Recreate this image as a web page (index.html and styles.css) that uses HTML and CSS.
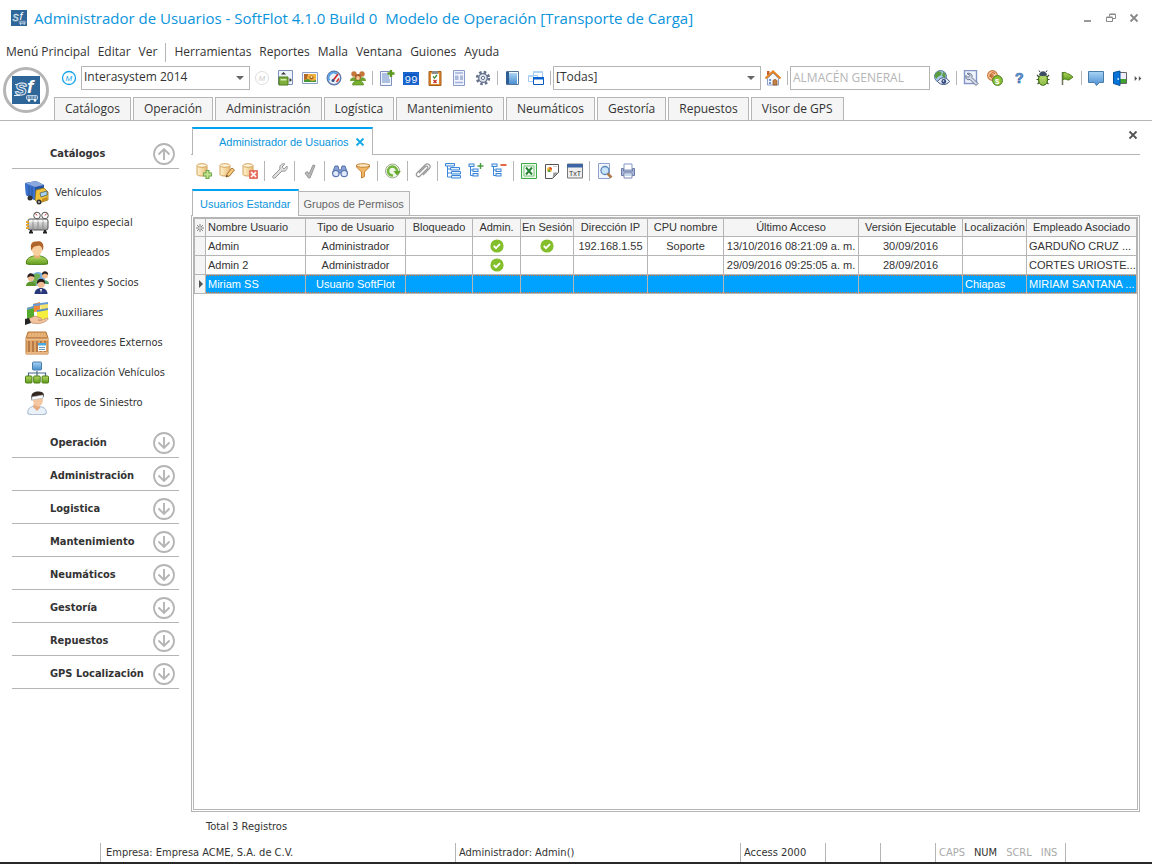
FILE: index.html
```html
<!DOCTYPE html>
<html lang="es">
<head>
<meta charset="utf-8">
<title>Administrador de Usuarios - SoftFlot</title>
<link rel="stylesheet" href="styles.css">
</head>
<body>
<svg class="defs" aria-hidden="true">
  <linearGradient id="gBlue" x1="0" y1="0" x2="0" y2="1"><stop offset="0" stop-color="#a9d3f5"/><stop offset="1" stop-color="#4a8fd0"/></linearGradient>
  <linearGradient id="gGreen" x1="0" y1="0" x2="0" y2="1"><stop offset="0" stop-color="#b5d860"/><stop offset="1" stop-color="#5d9a1c"/></linearGradient>
  <linearGradient id="gGold" x1="0" y1="0" x2="1" y2="0"><stop offset="0" stop-color="#fff3cf"/><stop offset="1" stop-color="#e9bc76"/></linearGradient>
  <linearGradient id="gGray" x1="0" y1="0" x2="0" y2="1"><stop offset="0" stop-color="#f6f6f6"/><stop offset="1" stop-color="#9b9b9b"/></linearGradient>
  <symbol id="up" viewBox="0 0 22 22"><circle cx="11" cy="11" r="10" fill="none" stroke="#b5b5b5" stroke-width="1.800"/><path d="M11 17V6M5.500 11.500 11 6l5.500 5.500" fill="none" stroke="#b5b5b5" stroke-width="1.900"/></symbol>
  <symbol id="down" viewBox="0 0 22 22"><circle cx="11" cy="11" r="10" fill="none" stroke="#b5b5b5" stroke-width="1.800"/><path d="M11 5v11M5.500 10.500 11 16l5.500-5.500" fill="none" stroke="#b5b5b5" stroke-width="1.900"/></symbol>
  <symbol id="check" viewBox="0 0 14 14"><circle cx="7" cy="7" r="6.600" fill="#84bf2b"/><path d="M3.800 7 6 9.200l4-4" fill="none" stroke="#fff" stroke-width="1.900"/></symbol>
  <symbol id="db" viewBox="0 0 16 16"><path d="M1 2.500v9c0 2 10 2 10 0v-9" fill="url(#gGold)" stroke="#d3a25d"/><ellipse cx="6" cy="2.500" rx="5" ry="1.800" fill="#fff6dc" stroke="#d3a25d"/></symbol>
  <symbol id="cross" viewBox="0 0 10 10"><path d="M1.500 1.500l7 7M8.500 1.500l-7 7" fill="none" stroke="currentColor" stroke-width="1.800"/></symbol>
  <symbol id="tree" viewBox="0 0 16 16"><rect x="1" y="1" width="5" height="2.500"/><rect x="5" y="6" width="5" height="2.500"/><rect x="5" y="10.500" width="5" height="2.500"/><path d="M2.500 3.500v9H5M2.500 7H5" fill="none"/></symbol>
  <symbol id="bus" viewBox="0 0 28 28"><rect x="14.500" y="19.500" width="11" height="4" rx="1" fill="#5c86ad" stroke="#dbe7f2" stroke-width=".8"/><path d="M17 20v3M20 20v3M23 20v3" stroke="#dbe7f2" stroke-width=".7"/><circle cx="17" cy="24.500" r="1.200" fill="#fff"/><circle cx="23" cy="24.500" r="1.200" fill="#fff"/></symbol>
</svg>

<header class="head">
  <div class="titlebar">
    <svg class="app-icon" viewBox="0 0 28 28"><rect width="28" height="28" fill="#2f6699"/><text x="3" y="19" font-family="Liberation Sans" font-size="21" font-style="italic" fill="#4f80ad" stroke="#e3edf6" stroke-width="1">s</text><text x="15" y="18" font-family="Liberation Sans" font-size="19" font-style="italic" fill="#fff">f</text><use href="#bus"/></svg>
    <h1 class="title">Administrador de Usuarios - SoftFlot 4.1.0 Build 0&nbsp; Modelo de Operación [Transporte de Carga]</h1>
    <div class="winbtns">
      <button class="winbtn" aria-label="Minimizar"><svg viewBox="0 0 10 10"><path d="M1 8h7" stroke="#999" stroke-width="2"/></svg></button>
      <button class="winbtn" aria-label="Restaurar"><svg viewBox="0 0 10 10"><path d="M.5 4.500h6v4h-6zM.5 4h6M3.500 3.500v-2h6v4h-3M3.500 1h6" fill="none" stroke="#888"/></svg></button>
      <button class="winbtn" aria-label="Cerrar"><svg viewBox="0 0 10 10"><use href="#cross"/></svg></button>
    </div>
  </div>
  <nav class="menubar">
    <button>Menú Principal</button><button>Editar</button><button>Ver</button><i class="menu-sep"></i><button>Herramientas</button><button>Reportes</button><button>Malla</button><button>Ventana</button><button>Guiones</button><button>Ayuda</button>
  </nav>
  <div class="ribbon">
    <button class="orb" aria-label="SoftFlot"><svg viewBox="0 0 28 28"><rect width="28" height="28" fill="#2f6699"/><path d="M3 8.500h5M2 19.500h6" stroke="#e3edf6"/><text x="3" y="19" font-family="Liberation Sans" font-size="22" font-weight="bold" font-style="italic" fill="#2f6699" stroke="#e3edf6" stroke-width="1">s</text><text x="15" y="17" font-family="Liberation Sans" font-size="19" font-weight="bold" font-style="italic" fill="#fff">f</text><use href="#bus"/></svg></button>
    <div class="ribbon-body">
      <div class="tools">
        <button aria-label="Módulo"><svg viewBox="0 0 16 16"><circle cx="8" cy="8" r="6.500" fill="#fff" stroke="#13a5ec" stroke-width="1.300"/><text x="4.500" y="11" font-family="Liberation Sans" font-size="8" font-style="italic" fill="#13a5ec">M</text></svg></button>
        <span class="combo combo-small"><select aria-label="Sistema"><option>Interasystem 2014</option></select></span>
        <button aria-label="Módulo inactivo"><svg viewBox="0 0 16 16"><circle cx="8" cy="8" r="6.500" fill="#fff" stroke="#ddd"/><text x="4.500" y="11" font-family="Liberation Sans" font-size="8" font-style="italic" fill="#ccc">M</text></svg></button>
        <button aria-label="Panel"><svg viewBox="0 0 16 16"><path d="M.5.500h14v14H.5z" fill="#eef3fb" stroke="#7c90bd"/><path d="M1 7h9v8H1z" fill="#7fae3d" stroke="#4c7c1e"/><path d="M2.500 9h6v1.500h-6z" fill="#d9eeb5"/><path d="M3 4.500 5.500 2 8 4.500zM11.500 8l2.500 2-2.500 2z" fill="#333"/></svg></button>
        <button aria-label="Imagen"><svg viewBox="0 0 16 16"><path d="M.5 2.500h15v11H.5z" fill="#f7faff" stroke="#8aa0c8"/><path d="M2 4h12v8H2z" fill="#f3b23c"/><path d="M2 10l4-1 4 2 4-1v2H2z" fill="#4d9836"/><path d="M2 4h4l-1 5-3 1z" fill="#b0682c"/><circle cx="9.500" cy="7.500" r="2" fill="#a55a24"/><circle cx="9.500" cy="7" r="1" fill="#fff0a0"/></svg></button>
        <button aria-label="Indicadores"><svg viewBox="0 0 16 16"><circle cx="8" cy="8" r="6.800" fill="#e9f1fb" stroke="#5f79ab" stroke-width="1.400"/><path d="M3.500 10.500A5 5 0 0 1 11 4" fill="none" stroke="#5aa4e8" stroke-width="2"/><path d="M7 10.500 12 4" stroke="#d32424" stroke-width="1.600"/><path d="M10.500 12 13 8.500" stroke="#de3a2c" stroke-width="1.600"/><circle cx="7" cy="10.500" r="1.500" fill="#34517e"/></svg></button>
        <button aria-label="Usuarios"><svg viewBox="0 0 16 16"><circle cx="4" cy="4" r="2.700" fill="#c4763b"/><circle cx="12" cy="4" r="2.700" fill="#c4763b"/><path d="M0 11c0-5 8-5 8 0zM8 11c0-5 8-5 8 0z" fill="#6ea32f"/><circle cx="8" cy="7" r="3" fill="#a85a27"/><circle cx="8" cy="8" r="1.900" fill="#f6c794"/><path d="M2.500 15c0-6 11-6 11 0z" fill="#77b02e" stroke="#4e7c1b" stroke-width=".6"/></svg></button>
        <i class="sep"></i>
        <button aria-label="Nuevo documento"><svg viewBox="0 0 16 16"><path d="M1.500 1.500h11v14h-11z" fill="#f3f6ff" stroke="#7f90be"/><path d="M3 4h6M3 6h7M3 8h7M3 10h8M3 12h8" stroke="#6689c6"/><path d="M12 0v7M8.500 3.500h7" stroke="#5b9a1e" stroke-width="2.400"/></svg></button>
        <button aria-label="Contador"><svg viewBox="0 0 16 16"><path d="M0 2h16v13H0z" fill="#0a56c4"/><path d="M1 3h14v11H1z" fill="none" stroke="#3c87e8" stroke-width=".6"/><text x="1.500" y="12.500" font-family="Liberation Mono" font-size="11" fill="#e8f3ff">99</text></svg></button>
        <button aria-label="Pendientes"><svg viewBox="0 0 16 16"><path d="M2 1.500h12v14H2z" fill="#dc8a2e" stroke="#a95c16"/><path d="M4 3.500h8v10.500H4z" fill="#fff"/><path d="M5 1h6v3H5z" fill="#8d8d8d"/><path d="M6 6.500l1.500 1.500L10 5" fill="none" stroke="#388a2c" stroke-width="1.200"/><path d="M6.500 10l3 3M9.500 10l-3 3" stroke="#c72b22" stroke-width="1.200"/></svg></button>
        <button aria-label="Formulario"><svg viewBox="0 0 16 16"><path d="M2.500.500h11v15h-11z" fill="#eff3fd" stroke="#8b9bc7"/><path d="M4 3h8M4 12.500h8" stroke="#a2b1d9" stroke-width="1.500"/><path d="M4 5.500h3.500V10H4zM9 5.500h3V10H9z" fill="#a9b7db"/></svg></button>
        <button aria-label="Configuración"><svg viewBox="0 0 16 16"><circle cx="8" cy="8" r="5.800" fill="none" stroke="#67728e" stroke-width="2.800" stroke-dasharray="2.500 2.055"/><circle cx="8" cy="8" r="4.300" fill="#dfe4ee" stroke="#67728e" stroke-width="1.300"/><circle cx="8" cy="8" r="1.600" fill="#fff" stroke="#67728e"/></svg></button>
        <i class="sep"></i>
        <button aria-label="Bitácora"><svg viewBox="0 0 16 16"><path d="M2.500 1.500h12v13h-12z" fill="#f5f8fc" stroke="#55749a"/><path d="M2 2h3v12H2z" fill="#2f5f92"/><path d="M5 3h8v11H5z" fill="url(#gBlue)"/></svg></button>
        <button aria-label="Ventanas"><svg viewBox="0 0 16 16"><path d="M5.500 1.500h9v6h-9zM.5 5.500h9v6h-9z" fill="#fff" stroke="#9fc8f2"/><path d="M5 1h10v2H5zM0 5h6v2H0z" fill="#b4d6f6"/><path d="M5.500 7.500h10v7h-10z" fill="#fff" stroke="#0a58c0"/><path d="M5 7h11v2.500H5z" fill="#0a62d0"/></svg></button>
        <i class="sep"></i>
        <span class="combo combo-wide"><select aria-label="Base"><option>[Todas]</option></select></span>
        <button aria-label="Inicio"><svg viewBox="0 0 16 16"><path d="M2.500 8.500v6.500h11V8.500L8 3z" fill="#f5f8ff" stroke="#8b9dc7"/><path d="M2 1h2.500v4H2z" fill="#c85b2b"/><path d="M.5 8.500 8 1.500l7.500 7" fill="none" stroke="#e38322" stroke-width="2.200"/><path d="M4 9h2v2H4zM4 12h2v2H4z" fill="#6b8fd4"/><path d="M8 15v-4c0-2 4-2 4 0v4z" fill="#c48248" stroke="#8e5222" stroke-width=".7"/></svg></button>
        <i class="sep"></i>
        <input class="store" aria-label="Almacén" value="ALMACÉN GENERAL">
        <button aria-label="Ver mundo"><svg viewBox="0 0 16 16"><circle cx="6.500" cy="6.500" r="6" fill="#a7cbe8" stroke="#55759c"/><path d="M3 2c3-2 6 1 4 3S3 6 3 9l-2-2C0 5 1 3 3 2zM9 2c3 1 3 4 2 6L8 6z" fill="#5a9d41"/><path d="M3.500 11.500c3-5 9-5 12 0-3 4-9 4-12 0z" fill="#e6edfa" stroke="#445781"/><circle cx="9.800" cy="11.500" r="2.400" fill="#32497c"/><circle cx="9.500" cy="11" r=".8" fill="#fff"/></svg></button>
        <i class="sep"></i>
        <button aria-label="Herramienta"><svg viewBox="0 0 16 16"><path d="M1.500.500h12v13h-12z" fill="#f0f4ff" stroke="#8496c6" stroke-width="1.400"/><path d="M4 3.500c3-1 6 1 5 4l6 6-2 2-6-6c-3 1-5-1-4-4l2 2 2-2z" fill="#d3d9e5" stroke="#566585" stroke-width=".9"/></svg></button>
        <button aria-label="Moneda"><svg viewBox="0 0 16 16"><circle cx="5.500" cy="5.500" r="4.900" fill="#f8c69c" stroke="#c8763e" stroke-width="1.100"/><path d="M8 3.500C5 1.500 3.500 4 3.500 5.500S5 9.500 8 7.500M2.500 5h4M2.500 6.300h4" fill="none" stroke="#b4521b"/><circle cx="10.500" cy="10.500" r="4.900" fill="#8bc037" stroke="#467c19"/><text x="8" y="13.500" font-family="Liberation Sans" font-size="8" font-weight="bold" fill="#fff">$</text></svg></button>
        <button aria-label="Ayuda"><svg viewBox="0 0 16 16"><text x="4" y="13" font-family="Liberation Sans" font-size="14" font-weight="bold" fill="#72a5dd" stroke="#3567a7" stroke-width=".7">?</text></svg></button>
        <button aria-label="Errores"><svg viewBox="0 0 16 16"><path d="M2 5l2 2M14 5l-2 2M1.500 9.500H4M14.500 9.500H12M2.500 14 5 12M13.500 14 11 12" stroke="#3d4d27" stroke-width="1.200"/><ellipse cx="8" cy="9.800" rx="4.700" ry="5.500" fill="url(#gGreen)" stroke="#3f6f16"/><path d="M4 5c1-5 7-5 8 0-2 1.500-6 1.500-8 0z" fill="#3e4c63"/><path d="M8 6v9M6 7v7M10 7v7" stroke="#d2ec8e" stroke-width=".8"/><path d="M5 2 4 .5M11 2l1-1.500" stroke="#333"/></svg></button>
        <button aria-label="Marca"><svg viewBox="0 0 16 16"><path d="M3.500 2v13" stroke="#6b7452" stroke-width="1.500"/><path d="M4 2.500c3-1 4 2 6 1.500l4 3-4 3c-2 .5-3-2-6-.5z" fill="url(#gGreen)" stroke="#4d8419"/></svg></button>
        <i class="sep"></i>
        <button aria-label="Mensajes"><svg viewBox="0 0 16 16"><path d="M.5 1.500h15v11h-4l-3 3-2-3h-6z" fill="url(#gBlue)" stroke="#4a7ca9"/></svg></button>
        <button aria-label="Salir"><svg viewBox="0 0 16 16"><path d="M7.500 2.500h7v11h-7z" fill="#eef" stroke="#666"/><path d="M8 9h6v4H8z" fill="#3fa22f"/><path d="M1.500 2.500 8 1v14.500l-6.500-2z" fill="#0875d6" stroke="#0750a0"/><circle cx="6.200" cy="9" r=".9" fill="#d6ecff"/></svg></button>
        <button class="more" aria-label="Más"><svg viewBox="0 0 8 6"><path d="M0 0l3 3-3 3zM5 0l3 3-3 3z" fill="#555"/></svg></button>
      </div>
      <nav class="tabs">
        <button>Catálogos</button><button>Operación</button><button>Administración</button><button>Logística</button><button>Mantenimiento</button><button>Neumáticos</button><button>Gestoría</button><button>Repuestos</button><button>Visor de GPS</button>
      </nav>
    </div>
  </div>
</header>

<div class="body">
  <aside class="side">
    <button class="group">Catálogos<svg><use href="#up"/></svg></button>
    <ul class="items">
      <li><a href="#"><svg viewBox="0 0 24 24"><path d="M0 2 11 0l8 4v13L9 19 1 14z" fill="#2453a5"/><path d="M0 2l10 4v13l-9-5z" fill="#3b72cd"/><path d="M0 2 11 0l8 4-9 2z" fill="#8ba9dc"/><path d="M4 5v11M7 6v11" stroke="#28529c"/><path d="M11 9l8-2 4 4v8l-9 3-4-3z" fill="#efc33a" stroke="#9c7617" stroke-width=".8"/><path d="M15 12l7-2v4l-6 2z" fill="#a7d3ef" stroke="#456" stroke-width=".7"/><circle cx="5" cy="17" r="2.500" fill="#333"/><circle cx="14" cy="21" r="2.500" fill="#333"/><circle cx="14" cy="21" r="1" fill="#bbb"/><path d="M17 18l5-2v3l-5 2z" fill="#c78d1d"/></svg>Vehículos</a></li>
      <li><a href="#"><svg viewBox="0 0 24 24"><rect x="3" y="8" width="20" height="11" rx="2" fill="url(#gGray)" stroke="#555"/><path d="M8 8v11M13 8v11M18 8v11" stroke="#8b8b8b"/><path d="M4 10h18" stroke="#fff"/><path d="M1 11h3M1 14h3M1 17h3" stroke="#e9a92d" stroke-width="2"/><path d="M6 19v3M20 19v3M4 21.500h4M18 21.500h4" stroke="#222" stroke-width="2"/><circle cx="12" cy="4.500" r="3.300" fill="#fff" stroke="#555"/><circle cx="20" cy="4.500" r="3.300" fill="#fff" stroke="#555"/><path d="M12 4.500l-1.500-2M20 4.500l1.500-2" stroke="#d22"/></svg>Equipo especial</a></li>
      <li><a href="#"><svg viewBox="0 0 24 24"><path d="M1.500 23c-1-6 4-7 7-8h7c3 1 8 2 7 8-6 1-15 1-21 0z" fill="url(#gGreen)" stroke="#4d821b"/><path d="M9 12h6v4c-2 2-4 2-6 0z" fill="#e8b077"/><ellipse cx="12" cy="8.500" rx="5" ry="6.500" fill="#f7cf9e"/><path d="M6.500 10C4 1 9 0 12 .5c5-1 8 3 5.500 9.500C17 6 16 5 14 4.500c-3 1-6 0-7.500 5.500z" fill="#b0652a"/></svg>Empleados</a></li>
      <li><a href="#"><svg viewBox="0 0 24 24"><circle cx="13" cy="8" r="7" fill="#78afe0"/><path d="M10 3c4-2 7 2 4 4s0 5-3 6-5-8-1-10z" fill="#6faf50"/><path d="M1 15c0-6 10-6 10 0z" fill="#5b962d"/><circle cx="6" cy="7" r="3.200" fill="#efbd94"/><path d="M2.500 7c-1-6 7-6 7-1-3-1-5-1-7 1z" fill="#2a201d"/><path d="M16 13c0-5 8-5 8 0z" fill="#4d9d69"/><circle cx="20" cy="4.500" r="3" fill="#efbd94"/><path d="M17 4c-1-5 7-5 6 0-3-2-4-1-6 0z" fill="#282220"/><path d="M9.500 23c0-8 13-8 13 0z" fill="#28387b"/><circle cx="16" cy="13" r="3.800" fill="#efbd94"/><path d="M12 13c-1-7 9-7 8 0-2-3-5-3-8 0z" fill="#261d1b"/><path d="M15 18l1 4 1-4z" fill="#fff"/></svg>Clientes y Socios</a></li>
      <li><a href="#"><svg viewBox="0 0 24 24"><path d="M2 7l7-2v12l-7 1z" fill="#54ab2b"/><path d="M8 3l7-2v9l-6 1z" fill="#f0883a"/><path d="M2 7l7-2v2L2 9zM8 3l15-2v3L8 5z" fill="#679bd8"/><path d="M15 4l8-1v6l-7 1z" fill="#f3e270"/><path d="M12 9l11-2v11l-11 1z" fill="#f5ee3c"/><path d="M12 9l11-2v2l-11 2z" fill="#5b8ec8"/><path d="M3 18l7-3 6 2c2 1 0 3-3 2 4 1 6-1 9-2 2 0 1 2-1 3-5 3-8 3-14 2z" fill="#f2c39e" stroke="#bd8963" stroke-width=".7"/><path d="M0 18l4-1 2 5-6 2z" fill="#252525"/></svg>Auxiliares</a></li>
      <li><a href="#"><svg viewBox="0 0 24 24"><path d="M3 1h18l2 6v16H1V7z" fill="#dfa66b" stroke="#b9793f"/><path d="M2 7h20" stroke="#a5683a"/><path d="M4 3h16M3.500 5h17" stroke="#f2c58c" stroke-dasharray="2 1"/><path d="M4 10v11M8 10v11M12 10v11M16 10v11M20 10v11" stroke="#b57a45" stroke-width="2"/><path d="M1 8.500h22M1 22h22" stroke="#efbf87" stroke-width="1.500"/><path d="M13 12h8v8h-8z" fill="#fff"/><path d="M13 12h8v2.500h-8z" fill="#4ba8e0"/><path d="M14 16.500h6M14 18.500h6" stroke="#6b9ac0"/></svg>Proveedores Externos</a></li>
      <li><a href="#"><svg viewBox="0 0 24 24"><path d="M12 10v6M3.500 16v-4h17v4" fill="none" stroke="#456888" stroke-width="1.200"/><rect x="7.500" y="1" width="9" height="8" rx="1" fill="url(#gBlue)" stroke="#4b7dab"/><rect x=".5" y="15" width="6.500" height="7" rx="1" fill="url(#gGreen)" stroke="#4c7f16"/><rect x="8.700" y="15" width="6.500" height="7" rx="1" fill="url(#gGreen)" stroke="#4c7f16"/><rect x="17" y="15" width="6.500" height="7" rx="1" fill="url(#gGreen)" stroke="#4c7f16"/></svg>Localización Vehículos</a></li>
      <li><a href="#"><svg viewBox="0 0 24 24"><path d="M3 23c-1-6 3-7 6-8l8 1c3 1 5 3 4 7-6 1-12 1-18 0z" fill="#eaf1f8" stroke="#a0b7cf"/><path d="M9 12h6v5l-3 3-4-4z" fill="#e6aa80"/><ellipse cx="13" cy="9" rx="5" ry="6.500" fill="#f4c7a2"/><path d="M7 10C4 1 11 0 14 .5c5 0 6 4 4 6L8 6z" fill="#342823"/><path d="M7 6l11-2v3L7 9z" fill="#fff" stroke="#b3bac2" stroke-width=".7"/></svg>Tipos de Siniestro</a></li>
    </ul>
    <button class="group">Operación<svg><use href="#down"/></svg></button>
    <button class="group">Administración<svg><use href="#down"/></svg></button>
    <button class="group">Logistica<svg><use href="#down"/></svg></button>
    <button class="group">Mantenimiento<svg><use href="#down"/></svg></button>
    <button class="group">Neumáticos<svg><use href="#down"/></svg></button>
    <button class="group">Gestoría<svg><use href="#down"/></svg></button>
    <button class="group">Repuestos<svg><use href="#down"/></svg></button>
    <button class="group">GPS Localización<svg><use href="#down"/></svg></button>
  </aside>

  <main class="main">
    <div class="pagebar">
      <div class="page-tab"><span>Administrador de Usuarios</span><button aria-label="Cerrar pestaña"><svg><use href="#cross"/></svg></button></div>
      <button class="page-close" aria-label="Cerrar página"><svg><use href="#cross"/></svg></button>
    </div>
    <div class="tools grid-tools">
      <button aria-label="Agregar"><svg viewBox="0 0 16 16"><use href="#db"/><path d="M11.500 7v9M7 11.500h9" stroke="#6fa846" stroke-width="4"/><path d="M11.500 8v7M8 11.500h7" stroke="#c5e48f" stroke-width="1.800"/></svg></button>
      <button aria-label="Editar"><svg viewBox="0 0 16 16"><use href="#db"/><path d="M7 14l1-3 5-6 2.500 2-5 6z" fill="#f6c879" stroke="#a97435"/><path d="M7 14l1-2 1 1z" fill="#333"/></svg></button>
      <button aria-label="Eliminar"><svg viewBox="0 0 16 16"><use href="#db"/><rect x="7" y="7" width="9" height="9" rx="1" fill="#e6735f"/><path d="M9 9l5 5M14 9l-5 5" stroke="#fff" stroke-width="1.600"/></svg></button>
      <i class="sep"></i>
      <button aria-label="Ajustes"><svg viewBox="0 0 16 16"><path d="M1 13l7-7c-1-3 1-6 5-5l-3 3 2 2 3-3c1 4-2 6-5 5l-7 7c-2 1-3-1-2-2z" fill="#dedede" stroke="#989898"/></svg></button>
      <i class="sep"></i>
      <button aria-label="Aceptar"><svg viewBox="0 0 16 16"><path d="M3 10l2.500-1.500L7 11l4-9 2 .5L8 15H6.500z" fill="#b9b9b9" stroke="#999"/></svg></button>
      <i class="sep"></i>
      <button aria-label="Buscar"><svg viewBox="0 0 16 16"><path d="M3 3h3l1 4h2l1-4h3l2.500 7h-15z" fill="#8aa4d6" stroke="#5570a8"/><circle cx="3.800" cy="10.500" r="3.200" fill="#dfe9fa" stroke="#5b76b0" stroke-width="1.200"/><circle cx="12.200" cy="10.500" r="3.200" fill="#dfe9fa" stroke="#5b76b0" stroke-width="1.200"/></svg></button>
      <button aria-label="Filtrar"><svg viewBox="0 0 16 16"><path d="M1.500 2v2l5 5v6l3-1.500V9l5-5V2z" fill="#f1b765" stroke="#c4833a"/><ellipse cx="8" cy="2.500" rx="6.500" ry="1.800" fill="#fde9c4" stroke="#c4833a"/></svg></button>
      <i class="sep"></i>
      <button aria-label="Actualizar"><svg viewBox="0 0 16 16"><circle cx="7.500" cy="8" r="7" fill="#eef6e6" stroke="#a0a994"/><path d="M8 12.500A4.500 4.500 0 1 1 12 8" fill="none" stroke="#72b53c" stroke-width="2.400"/><path d="M8.500 8H16l-4 4.500z" fill="#61a82a"/></svg></button>
      <i class="sep"></i>
      <button aria-label="Adjuntar"><svg viewBox="0 0 16 16"><path d="M4 10l6-6c2-2 4 0 2 2l-7 7c-2 2-5-1-3-3l8-8c3-3 7 1 4 4l-6 6" fill="none" stroke="#999" stroke-width="1.200"/></svg></button>
      <i class="sep"></i>
      <button aria-label="Árbol"><svg viewBox="0 0 16 16" fill="#e2effc" stroke="#3a86d8"><path d="M2.500 3v11H7M2.500 6H6M2.500 10H7" fill="none"/><path d="M.5.500h9V3h-9zM5.500 4.500h9V7h-9zM6.500 8.500h9V11h-9zM6.500 12.500h9V15h-9z"/></svg></button>
      <button aria-label="Expandir"><svg viewBox="0 0 16 16" fill="#e2effc" stroke="#3a86d8"><use href="#tree"/><path d="M12.500 0v6M9.500 3h6" stroke="#4b9b43" stroke-width="1.400"/></svg></button>
      <button aria-label="Contraer"><svg viewBox="0 0 16 16" fill="#e2effc" stroke="#3a86d8"><use href="#tree"/><path d="M9.500 2h6" stroke="#e4552e" stroke-width="1.800"/></svg></button>
      <i class="sep"></i>
      <button aria-label="Excel"><svg viewBox="0 0 16 16"><path d="M.5.500h15v15H.5z" fill="#eaf8e8" stroke="#3eaa4a"/><path d="M3 3h10v10H3z" fill="#fff" stroke="#70c176"/><path d="M5 4.500l6 7M11 4.500l-6 7" stroke="#278537" stroke-width="2"/></svg></button>
      <button aria-label="Reporte"><svg viewBox="0 0 16 16"><path d="M1.500 1.500h13v8l-6 6h-7z" fill="#fff" stroke="#555"/><path d="M14 9.500H9.500L8.500 15z" fill="#999"/><circle cx="5.500" cy="6.500" r="2.500" fill="#f3bb39"/><path d="M5.500 6.500V4A2.500 2.500 0 0 1 8 6.500z" fill="#d8422f"/><path d="M5.500 6.500 3.500 8a2.500 2.500 0 0 0 3 .7z" fill="#4a9c43"/><path d="M9 3.500h4" stroke="#ccc"/></svg></button>
      <button aria-label="Texto"><svg viewBox="0 0 16 16"><path d="M.5 1h15v14H.5z" fill="#eee" stroke="#777"/><path d="M0 1h16v3.500H0z" fill="#3d64a4"/><text x="2" y="12.500" font-family="Liberation Sans" font-size="7" fill="#333">TxT</text></svg></button>
      <i class="sep"></i>
      <button aria-label="Vista previa"><svg viewBox="0 0 16 16"><path d="M1.500.500h11v15h-11z" fill="#f0f5fe" stroke="#8ea0cd"/><circle cx="8" cy="7.500" r="4" fill="#c8e5f9" stroke="#5d86b8" stroke-width="1.300"/><path d="M10.500 10.500l4 4" stroke="#b17c46" stroke-width="2.500"/></svg></button>
      <button aria-label="Imprimir"><svg viewBox="0 0 16 16"><path d="M4 1h8v6H4z" fill="#fff" stroke="#8295c6"/><path d="M1.500 5.500h2V8h9V5.500h2v7h-13z" fill="#a9b5d4" stroke="#6d7da8"/><path d="M4 10h8v5H4z" fill="#fff" stroke="#7989b3"/><path d="M5 12h6" stroke="#8fb2e0"/></svg></button>
    </div>
    <div class="subtabs"><button class="on">Usuarios Estandar</button><button>Grupos de Permisos</button></div>
    <div class="panel"><div class="panel-in">
      <table class="grid">
        <colgroup><col class="c0"><col class="c100"><col class="c100"><col class="c67"><col class="c48"><col class="c53"><col class="c74"><col class="c76"><col class="c135"><col class="c104"><col class="c64"><col></colgroup>
        <thead><tr><th class="mark"><svg viewBox="0 0 8 8"><path d="M4 0v8M0 4h8M1 1l6 6M7 1 1 7" stroke="#666" stroke-width=".8"/><circle cx="4" cy="4" r="1" fill="#eee"/></svg></th><th class="l">Nombre Usuario</th><th>Tipo de Usuario</th><th>Bloqueado</th><th>Admin.</th><th>En Sesión</th><th>Dirección IP</th><th>CPU nombre</th><th>Último Acceso</th><th>Versión Ejecutable</th><th>Localización</th><th>Empleado Asociado</th></tr></thead>
        <tbody>
          <tr><td class="mark"></td><td class="l">Admin</td><td>Administrador</td><td></td><td><svg><use href="#check"/></svg></td><td><svg><use href="#check"/></svg></td><td>192.168.1.55</td><td>Soporte</td><td>13/10/2016 08:21:09 a. m.</td><td>30/09/2016</td><td class="l"></td><td class="l">GARDUÑO CRUZ ...</td></tr>
          <tr><td class="mark"></td><td class="l">Admin 2</td><td>Administrador</td><td></td><td><svg><use href="#check"/></svg></td><td></td><td></td><td></td><td>29/09/2016 09:25:05 a. m.</td><td>28/09/2016</td><td class="l"></td><td class="l">CORTES URIOSTE...</td></tr>
          <tr class="sel"><td class="mark"><svg viewBox="0 0 8 8"><path d="M3 0l4 4-4 4z" fill="#555"/></svg></td><td class="l">Miriam SS</td><td>Usuario SoftFlot</td><td></td><td></td><td></td><td></td><td></td><td></td><td></td><td class="l">Chiapas</td><td class="l">MIRIAM SANTANA ...</td></tr>
        </tbody>
      </table>
    </div></div>
    <p class="total">Total 3 Registros</p>
  </main>
</div>

<footer class="status">
  <span class="s-pad"></span><span class="s-company">Empresa: Empresa ACME, S.A. de C.V.</span><span class="s-user">Administrador: Admin()</span><span class="s-db">Access 2000</span><span class="s-small"></span><span class="s-small"></span><span class="s-keys"><i>CAPS</i><b>NUM</b><i>SCRL</i><i>INS</i></span><span class="s-end"></span>
</footer>
</body>
</html>
```

FILE: styles.css
```css
* { box-sizing: border-box; }
body {
  margin: 0;
  min-height: 100vh;
  display: flex;
  flex-direction: column;
  background: #fff;
  color: #333;
  font: 12px/16px "Open Sans", "Noto Sans", sans-serif;
}
button { border: 0; padding: 0; margin: 0; background: none; color: inherit; font: inherit; }
svg { display: block; }
.defs { position: absolute; width: 0; height: 0; }

/* Title and menu */
.head { border-bottom: 1px solid #b5b5b5; }
.titlebar { display: flex; align-items: center; height: 36px; padding: 0 13px 0 11px; }
.app-icon { width: 16px; height: 16px; }
.title { margin: 0 auto 0 7px; color: #0a94dc; font-size: 15px; line-height: 20px; font-weight: 400; white-space: nowrap; }
.winbtns { display: flex; gap: 13px; color: #888; }
.winbtn svg { width: 10px; height: 10px; }
.menubar { display: flex; align-items: center; gap: 8px; height: 30px; padding: 2px 6px 0; white-space: nowrap; }
.menu-sep { width: 1px; height: 19px; background: #b5b5b5; }

/* Ribbon */
.ribbon { display: flex; }
.orb { width: 46px; height: 46px; margin: 1px 5px 7px 3px; border: 3px solid #b5b5b5; border-radius: 50%; display: grid; place-items: center; }
.orb svg { width: 28px; height: 28px; }
.ribbon-body { flex: 1; min-width: 0; display: flex; flex-direction: column; justify-content: space-between; }
.tools { display: flex; align-items: center; height: 24px; }
.ribbon-body .tools { padding: 0 8px 0 3px; }
.tools button { flex: none; width: 24px; height: 24px; display: grid; place-items: center; }
.tools svg { width: 16px; height: 16px; }
.tools .sep { flex: none; width: 1px; height: 14px; margin: 0 2px; background: #b5b5b5; }
.tools .more { width: 12px; }
.tools .more svg { width: 8px; height: 5px; }
.combo { display: grid; grid-template-columns: 1fr 13px; align-items: center; height: 24px; border: 1px solid #b5b5b5; }
.combo select { grid-area: 1 / 1 / 2 / 3; width: 100%; height: 22px; padding: 0 2px 2px; border: 0; appearance: none; background: none; color: #333; font: inherit; }
.combo::after { content: ""; grid-area: 1 / 2 / 2 / 3; width: 0; border: 4px solid transparent; border-top-color: #666; border-bottom: 0; }
.combo-small { flex: none; width: 169px; }
.combo-wide { flex: 1; min-width: 80px; }
.store { flex: none; width: 140px; height: 24px; padding: 0 2px 2px; border: 1px solid #b5b5b5; background: #fff; color: #b5b5b5; font: inherit; }
.tabs { display: flex; gap: 2px; }
.tabs button { height: 23px; padding: 0 10px; border: 1px solid #b5b5b5; border-bottom: 0; background: #f5f5f5; white-space: nowrap; }

/* Sidebar */
.body { flex: 1; display: flex; }
.side { flex: none; width: 191px; padding: 15px 12px 0; font-family: "DejaVu Sans Condensed", "DejaVu Sans", sans-serif; font-size: 11px; }
.group { display: flex; align-items: center; justify-content: space-between; width: 100%; height: 33px; padding: 3px 4px 0 38px; border-bottom: 1px solid #b5b5b5; font-weight: 700; text-align: left; white-space: nowrap; }
.group svg { flex: none; width: 22px; height: 22px; }
.items { list-style: none; margin: 0; padding: 9px 0 7px 13px; }
.items a { display: flex; align-items: center; gap: 6px; height: 30px; color: #333; text-decoration: none; white-space: nowrap; }
.items svg { width: 24px; height: 24px; }

/* Work area */
.main { flex: 1; min-width: 0; display: flex; flex-direction: column; padding: 6px 12px 0 0; font-family: "Liberation Sans", Arial, sans-serif; font-size: 11px; }
.pagebar { display: flex; justify-content: space-between; border-bottom: 1px solid #b5b5b5; }
.page-tab { display: flex; align-items: center; gap: 6px; height: 28px; margin: 0 0 -1px 1px; padding: 0 7px 0 26px; background: #fff; border: 1px solid #b5b5b5; border-width: 2px 1px 0; border-top-color: #00a2f2; color: #0a94dc; }
.page-tab svg { width: 10px; height: 10px; color: #12a9e8; }
.page-close { width: 12px; height: 16px; color: #555; }
.page-close svg { width: 10px; height: 10px; }
.main .grid-tools { height: 32px; margin-bottom: 2px; padding-left: 1px; }
.grid-tools button { width: 23px; }
.main .grid-tools .sep { height: 20px; margin: 0 3px; }
.subtabs { display: flex; align-items: flex-end; }
.subtabs button { height: 24px; padding: 0 5px; border: 1px solid #b5b5b5; border-width: 1px 1px 0 0; background: #f5f5f5; color: #666; }
.subtabs .on { height: 27px; margin: 0 0 -1px 1px; padding: 0 7px; border-width: 2px 1px 0; border-top-color: #00a2f2; background: #fff; color: #0a94dc; z-index: 1; }
.panel { flex: 1; display: flex; border: 1px solid #b5b5b5; padding: 1px; }
.panel-in { flex: 1; min-width: 0; border: 1px solid #b5b5b5; }
.grid { width: 100%; table-layout: fixed; border-collapse: separate; border-spacing: 0; border-top: 1px solid #b5b5b5; line-height: 17px; }
.c0 { width: 12px; }
.c48 { width: 48px; }
.c53 { width: 53px; }
.c64 { width: 64px; }
.c67 { width: 67px; }
.c74 { width: 74px; }
.c76 { width: 76px; }
.c100 { width: 100px; }
.c104 { width: 104px; }
.c135 { width: 135px; }
.grid th, .grid td { height: 19px; padding: 0 1px; border-right: 1px solid #b5b5b5; border-bottom: 1px solid #b5b5b5; font-weight: 400; text-align: center; white-space: nowrap; overflow: hidden; }
.grid th { height: 18px; background: #f5f5f5; }
.grid .l { padding-left: 2px; text-align: left; }
.grid .mark { border-left: 1px solid #b5b5b5; background: #f5f5f5; }
.grid svg { width: 14px; height: 14px; margin: 0 auto; }
.grid .mark svg { width: 8px; height: 8px; }
.sel td:not(.mark) {
  color: #fff;
  background:
    linear-gradient(90deg, #d9773f 50%, #00a2ff 50%) left top / 2px 1px repeat-x,
    linear-gradient(90deg, #d9773f 50%, #00a2ff 50%) left bottom / 2px 1px repeat-x,
    #00a2ff;
}
.total { margin: 0; padding: 7px 15px 8px; font: 11px/16px "DejaVu Sans Condensed", "DejaVu Sans", sans-serif; }

/* Status bar */
.status { display: flex; height: 21px; border-bottom: 2px solid #282828; font: 11px/19px "DejaVu Sans Condensed", "DejaVu Sans", sans-serif; white-space: nowrap; }
.status span { flex: none; padding-left: 3px; border-left: 1px solid #b5b5b5; }
.status .s-pad { width: 100px; border-left: 0; }
.status .s-company { width: 355px; padding-left: 5px; }
.status .s-user { flex: 1 1 285px; }
.s-db { width: 85px; }
.s-small { width: 55px; }
.status .s-keys { display: flex; gap: 9px; width: 130px; }
.s-keys i { color: #aaa; font-style: normal; }
.s-keys b { font-weight: 400; }
.s-end { width: 87px; }
```
